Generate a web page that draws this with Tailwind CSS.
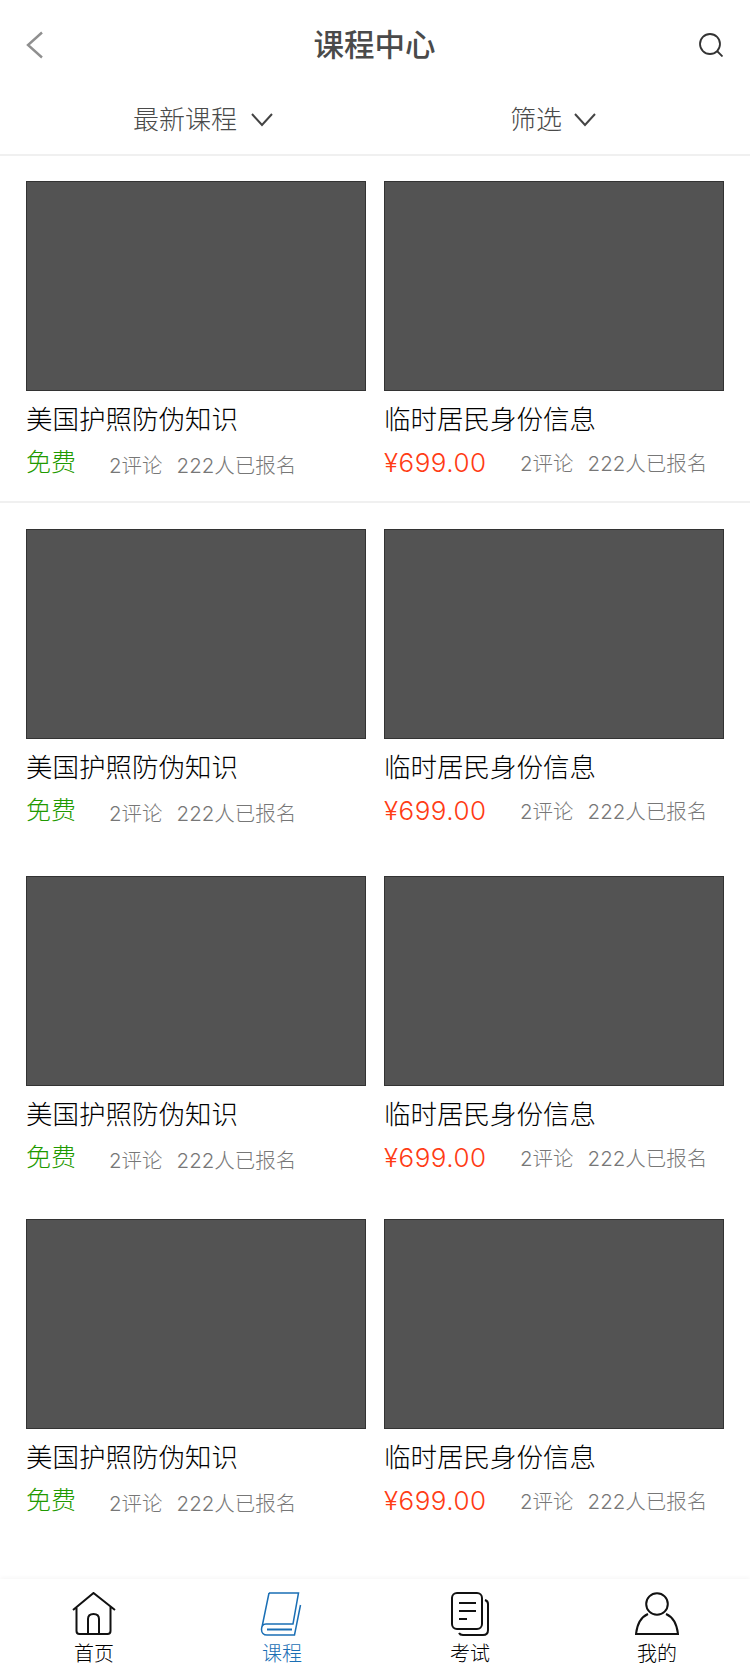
<!DOCTYPE html>
<html lang="zh">
<head>
  <meta charset="UTF-8">
  <meta name="viewport" content="width=device-width, initial-scale=1">
  <title>课程中心</title>
  <script src="https://cdn.jsdelivr.net/npm/@tailwindcss/browser@4"></script>
</head>
<body class="bg-white h-[1677px] flex flex-col overflow-hidden font-['Inter','Noto_Sans_CJK_SC',sans-serif]">

  <!-- header -->
  <header class="h-[90px] shrink-0 grid grid-cols-3 items-center pl-[26px] pr-[27px]">
    <svg class="w-[18px] h-[28px]" viewBox="0 0 18 28" fill="none" stroke="#8f8f8f" stroke-width="2.4"><path d="M16 1.5 2 14l14 12.5"/></svg>
    <h1 class="text-[30.5px] font-medium text-[#4a4a4a] leading-none text-center whitespace-nowrap">课程中心</h1>
    <svg class="w-[24px] h-[24px] justify-self-end" viewBox="0 0 24 24" fill="none" stroke="#333" stroke-width="1.8"><circle cx="11" cy="11" r="10"/><path d="m18 18 5.5 5.5"/></svg>
  </header>

  <!-- filters -->
  <div class="h-[66px] shrink-0 grid grid-cols-2 border-b-2 border-[#f0f0f0] text-[26px] text-[#4a4a4a] font-light">
    <div class="flex items-center pl-[133px] pb-[5px] gap-[14px]">
      <span>最新课程</span>
      <svg class="w-[22px] h-[14px]" viewBox="0 0 22 14" fill="none" stroke="#444" stroke-width="2"><path d="m1 1 10 11L21 1"/></svg>
    </div>
    <div class="flex items-center pl-[135px] pb-[5px] gap-[12px]">
      <span>筛选</span>
      <svg class="w-[22px] h-[14px]" viewBox="0 0 22 14" fill="none" stroke="#444" stroke-width="2"><path d="m1 1 10 11L21 1"/></svg>
    </div>
  </div>

  <!-- rows -->
  <section class="h-[347px] shrink-0 pt-[25px] border-b-2 border-[#f0f0f0] grid grid-cols-[340px_340px] gap-x-[18px] px-[26px] content-start">
    <article>
      <div class="h-[210px] bg-[#535353] border border-[#333]"></div>
      <h2 class="mt-[10px] h-[36px] text-[26.5px] leading-[36px] text-black font-light whitespace-nowrap">美国护照防伪知识</h2>
      <div class="mt-[7px] flex items-center h-[36px] font-light"><span class="w-[83px] text-[25px] text-[#1f9a00] pt-[2px]">免费</span><span class="text-[20.5px] text-[#777] pt-[8px]">2评论</span><span class="ml-[14px] text-[20.5px] text-[#777] pt-[8px]">222人已报名</span></div>
    </article>
    <article>
      <div class="h-[210px] bg-[#535353] border border-[#333]"></div>
      <h2 class="mt-[10px] h-[36px] text-[26.5px] leading-[36px] text-black font-light whitespace-nowrap">临时居民身份信息</h2>
      <div class="mt-[7px] flex items-center h-[36px] font-light"><span class="w-[136px] text-[26px] tracking-[0.5px] text-[#ff3b14]">¥699.00</span><span class="text-[20.5px] text-[#777] pt-[4px]">2评论</span><span class="ml-[14px] text-[20.5px] text-[#777] pt-[4px]">222人已报名</span></div>
    </article>
  </section>

  <section class="h-[347px] shrink-0 pt-[26px] grid grid-cols-[340px_340px] gap-x-[18px] px-[26px] content-start">
    <article>
      <div class="h-[210px] bg-[#535353] border border-[#333]"></div>
      <h2 class="mt-[10px] h-[36px] text-[26.5px] leading-[36px] text-black font-light whitespace-nowrap">美国护照防伪知识</h2>
      <div class="mt-[7px] flex items-center h-[36px] font-light"><span class="w-[83px] text-[25px] text-[#1f9a00] pt-[2px]">免费</span><span class="text-[20.5px] text-[#777] pt-[8px]">2评论</span><span class="ml-[14px] text-[20.5px] text-[#777] pt-[8px]">222人已报名</span></div>
    </article>
    <article>
      <div class="h-[210px] bg-[#535353] border border-[#333]"></div>
      <h2 class="mt-[10px] h-[36px] text-[26.5px] leading-[36px] text-black font-light whitespace-nowrap">临时居民身份信息</h2>
      <div class="mt-[7px] flex items-center h-[36px] font-light"><span class="w-[136px] text-[26px] tracking-[0.5px] text-[#ff3b14]">¥699.00</span><span class="text-[20.5px] text-[#777] pt-[4px]">2评论</span><span class="ml-[14px] text-[20.5px] text-[#777] pt-[4px]">222人已报名</span></div>
    </article>
  </section>

  <section class="h-[343px] shrink-0 pt-[26px] grid grid-cols-[340px_340px] gap-x-[18px] px-[26px] content-start">
    <article>
      <div class="h-[210px] bg-[#535353] border border-[#333]"></div>
      <h2 class="mt-[10px] h-[36px] text-[26.5px] leading-[36px] text-black font-light whitespace-nowrap">美国护照防伪知识</h2>
      <div class="mt-[7px] flex items-center h-[36px] font-light"><span class="w-[83px] text-[25px] text-[#1f9a00] pt-[2px]">免费</span><span class="text-[20.5px] text-[#777] pt-[8px]">2评论</span><span class="ml-[14px] text-[20.5px] text-[#777] pt-[8px]">222人已报名</span></div>
    </article>
    <article>
      <div class="h-[210px] bg-[#535353] border border-[#333]"></div>
      <h2 class="mt-[10px] h-[36px] text-[26.5px] leading-[36px] text-black font-light whitespace-nowrap">临时居民身份信息</h2>
      <div class="mt-[7px] flex items-center h-[36px] font-light"><span class="w-[136px] text-[26px] tracking-[0.5px] text-[#ff3b14]">¥699.00</span><span class="text-[20.5px] text-[#777] pt-[4px]">2评论</span><span class="ml-[14px] text-[20.5px] text-[#777] pt-[4px]">222人已报名</span></div>
    </article>
  </section>

  <section class="flex-1 pt-[26px] grid grid-cols-[340px_340px] gap-x-[18px] px-[26px] content-start">
    <article>
      <div class="h-[210px] bg-[#535353] border border-[#333]"></div>
      <h2 class="mt-[10px] h-[36px] text-[26.5px] leading-[36px] text-black font-light whitespace-nowrap">美国护照防伪知识</h2>
      <div class="mt-[7px] flex items-center h-[36px] font-light"><span class="w-[83px] text-[25px] text-[#1f9a00] pt-[2px]">免费</span><span class="text-[20.5px] text-[#777] pt-[8px]">2评论</span><span class="ml-[14px] text-[20.5px] text-[#777] pt-[8px]">222人已报名</span></div>
    </article>
    <article>
      <div class="h-[210px] bg-[#535353] border border-[#333]"></div>
      <h2 class="mt-[10px] h-[36px] text-[26.5px] leading-[36px] text-black font-light whitespace-nowrap">临时居民身份信息</h2>
      <div class="mt-[7px] flex items-center h-[36px] font-light"><span class="w-[136px] text-[26px] tracking-[0.5px] text-[#ff3b14]">¥699.00</span><span class="text-[20.5px] text-[#777] pt-[4px]">2评论</span><span class="ml-[14px] text-[20.5px] text-[#777] pt-[4px]">222人已报名</span></div>
    </article>
  </section>

  <!-- tab bar -->
  <nav class="h-[98px] shrink-0 flex bg-white shadow-[0_-2px_4px_rgba(0,0,0,0.03)] text-[20px] leading-[24px] text-black font-light">
    <a class="w-[188px] shrink-0 flex flex-col items-center pt-[13px]">
      <svg class="w-[44px] h-[44px]" viewBox="0 0 44 44" fill="none" stroke="#111" stroke-width="2"><path d="M1 18 21.500 1 43 18M4.500 15v24q0 3 3 3h28q3 0 3-3V15M16 42V27q0-5 5.500-5t5.500 5v15"/></svg>
      <span class="mt-[6px]">首页</span>
    </a>
    <a class="w-[188px] shrink-0 flex flex-col items-center pt-[13px] text-[#1a6fb5]">
      <svg class="w-[44px] h-[44px]" viewBox="0 0 44 44" fill="none" stroke="#1a6fb5" stroke-width="1.5"><path d="M9 1h29.500l-5.500 31H6c-3 0-4.500 2.500-4.500 5.500S3.500 43 7 43h27.500L40.500 13M2 35 9 1"/><path d="M7 37.500h25" stroke-width="2"/></svg>
      <span class="mt-[6px]">课程</span>
    </a>
    <a class="w-[188px] shrink-0 flex flex-col items-center pt-[13px]">
      <svg class="w-[44px] h-[44px] -translate-x-[1px]" viewBox="0 0 44 44" fill="none" stroke="#111" stroke-width="2"><rect x="5" y="1" width="30" height="36" rx="5"/><path d="M38 8q3 1 3 4v26q0 5-5 5H16q-3 0-4-2"/><path d="M12 11h17M12 19h17M12 27h8"/></svg>
      <span class="mt-[6px]">考试</span>
    </a>
    <a class="w-[186px] shrink-0 flex flex-col items-center pt-[13px]">
      <svg class="w-[44px] h-[44px]" viewBox="0 0 44 44" fill="none" stroke="#111" stroke-width="2"><circle cx="22" cy="12" r="10.800"/><path d="M13 22C6 25 2 33 1 42h42c-1-9-5-17-12-20"/></svg>
      <span class="mt-[6px]">我的</span>
    </a>
  </nav>
</body>
</html>
